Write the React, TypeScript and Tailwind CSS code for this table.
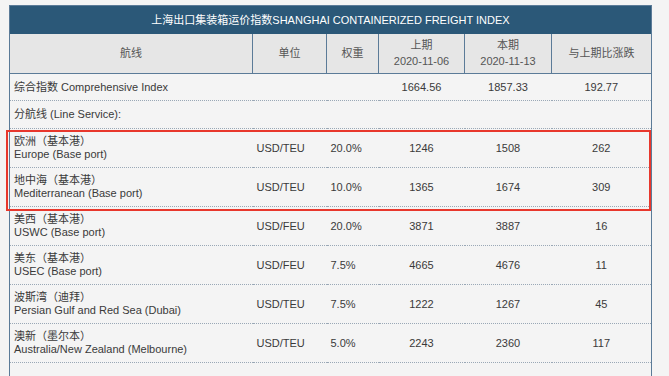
import React from 'react'

interface Route {
  cn: string
  en: string
  unit: string
  weight: string
  prev: string
  curr: string
  diff: string
}

const routes: Route[] = [
  { cn: '欧洲（基本港）', en: 'Europe (Base port)', unit: 'USD/TEU', weight: '20.0%', prev: '1246', curr: '1508', diff: '262' },
  { cn: '地中海（基本港）', en: 'Mediterranean (Base port)', unit: 'USD/TEU', weight: '10.0%', prev: '1365', curr: '1674', diff: '309' },
  { cn: '美西（基本港）', en: 'USWC (Base port)', unit: 'USD/FEU', weight: '20.0%', prev: '3871', curr: '3887', diff: '16' },
  { cn: '美东（基本港）', en: 'USEC (Base port)', unit: 'USD/FEU', weight: '7.5%', prev: '4665', curr: '4676', diff: '11' },
  { cn: '波斯湾（迪拜）', en: 'Persian Gulf and Red Sea (Dubai)', unit: 'USD/TEU', weight: '7.5%', prev: '1222', curr: '1267', diff: '45' },
  { cn: '澳新（墨尔本）', en: 'Australia/New Zealand (Melbourne)', unit: 'USD/TEU', weight: '5.0%', prev: '2243', curr: '2360', diff: '117' },
]

const th = 'border-r border-[#5b7b98] font-normal text-center align-middle leading-[16px]'
const row = 'border-b border-dotted border-[#9aa8b6]'

export default function App() {
  return (
    <div
      className="min-h-screen bg-[#f4f4f4] pl-[9px] pt-[5px] text-[11px] text-[#3a3a3a]"
      style={{ fontFamily: '"Liberation Sans", Arial, "Noto Sans CJK SC", sans-serif' }}
    >
      <div className="relative w-[643px]">
        <table className="w-[643px] table-fixed border-collapse border border-[#5b7b98] bg-[#f4f4f4]">
          <colgroup>
            <col className="w-[243px]" />
            <col className="w-[74px]" />
            <col className="w-[52px]" />
            <col className="w-[86px]" />
            <col className="w-[87px]" />
            <col />
          </colgroup>
          <thead>
            <tr className="h-[28px] bg-[#2b5878] text-white">
              <th colSpan={6} className="font-normal text-center">
                上海出口集装箱运价指数SHANGHAI CONTAINERIZED FREIGHT INDEX
              </th>
            </tr>
            <tr className="h-[40px] bg-[#e6e6e6] text-[#555] border-b border-[#5b7b98]">
              <th className={th}>航线</th>
              <th className={th}>单位</th>
              <th className={th}>权重</th>
              <th className={th}>
                上期
                <br />
                2020-11-06
              </th>
              <th className={th}>
                本期
                <br />
                2020-11-13
              </th>
              <th className="font-normal text-center">与上期比涨跌</th>
            </tr>
          </thead>
          <tbody>
            <tr className={`h-[27px] ${row}`}>
              <td className="pl-[4px]">综合指数 Comprehensive Index</td>
              <td></td>
              <td></td>
              <td className="text-center">1664.56</td>
              <td className="text-center">1857.33</td>
              <td className="text-center">192.77</td>
            </tr>
            <tr className={`h-[28px] ${row}`}>
              <td colSpan={6} className="pl-[4px]">
                分航线 (Line Service):
              </td>
            </tr>
            {routes.map((r) => (
              <tr key={r.en} className={`h-[39px] ${row}`}>
                <td className="pl-[4px] leading-[13px]">
                  {r.cn}
                  <br />
                  {r.en}
                </td>
                <td className="pl-[4px]">{r.unit}</td>
                <td className="pl-[4px]">{r.weight}</td>
                <td className="text-center">{r.prev}</td>
                <td className="text-center">{r.curr}</td>
                <td className="text-center">{r.diff}</td>
              </tr>
            ))}
            <tr className="h-[20px]">
              <td colSpan={6}></td>
            </tr>
          </tbody>
        </table>
        <div className="pointer-events-none absolute left-[-3px] top-[125px] h-[81px] w-[645px] border-2 border-[#e8372c]" />
      </div>
    </div>
  )
}
